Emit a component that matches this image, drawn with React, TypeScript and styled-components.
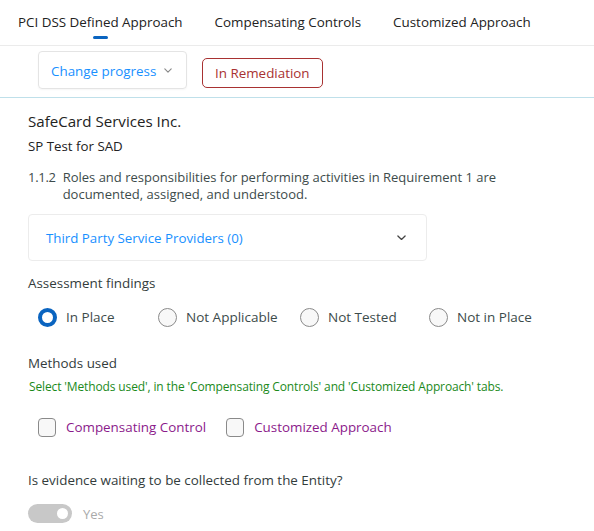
import React from 'react';
import styled, { createGlobalStyle } from 'styled-components';

const GlobalStyle = createGlobalStyle`
  body {
    margin: 0;
    background: #ffffff;
    font-family: 'Open Sans', 'Noto Sans', sans-serif;
    color: #222222;
  }
`;

const Page = styled.div`
  width: 594px;
  height: 531px;
  overflow: hidden;
`;

const TabBar = styled.div`
  height: 46px;
  display: flex;
  align-items: flex-start;
  gap: 32px;
  padding: 0 0 0 18px;
  border-bottom: 1px solid #ebebeb;
  box-sizing: border-box;
`;

const Tab = styled.div<{ $active?: boolean }>`
  position: relative;
  font-size: 13.4px;
  line-height: 20px;
  padding-top: 12px;
  color: #222222;
  &::after {
    content: '';
    display: ${p => (p.$active ? 'block' : 'none')};
    position: absolute;
    left: 50%;
    top: 36px;
    width: 15px;
    height: 3px;
    margin-left: -7px;
    border-radius: 2px;
    background: #0a64c0;
  }
`;

const StatusRow = styled.div`
  height: 52px;
  display: flex;
  align-items: center;
  gap: 15px;
  padding: 0 0 0 38px;
  border-bottom: 1px solid #bfe0ea;
  box-sizing: border-box;
`;

const ProgressButton = styled.div`
  width: 149px;
  height: 38px;
  box-sizing: border-box;
  display: flex;
  align-items: center;
  justify-content: space-between;
  padding: 1px 14px 0 12px;
  border: 1px solid #e4e4e4;
  border-radius: 4px;
  box-shadow: 0 1px 2px rgba(0, 0, 0, 0.04);
  color: #1890ff;
  font-size: 13.4px;
  margin-top: -3px;
`;

const StatusBadge = styled.div`
  height: 30px;
  box-sizing: border-box;
  padding: 0 12px;
  display: flex;
  align-items: center;
  border: 1px solid #a83232;
  border-radius: 5px;
  color: #a83232;
  font-size: 13.4px;
  margin-top: 3px;
`;

const Content = styled.div`
  padding: 12px 28px 0 28px;
  display: flex;
  flex-direction: column;
`;

const Company = styled.div`
  font-size: 15.1px;
  line-height: 22px;
  color: #222222;
`;

const Subtitle = styled.div`
  font-size: 13.3px;
  line-height: 20px;
  margin-top: 4px;
  color: #222222;
`;

const Requirement = styled.div`
  display: flex;
  gap: 7px;
  margin-top: 13px;
  font-size: 13px;
  line-height: 17px;
  color: #3d4b4b;
`;

const ReqNumber = styled.span`
  flex: 0 0 auto;
  letter-spacing: -0.3px;
`;

const Accordion = styled.div`
  width: 399px;
  height: 47px;
  margin-top: 11px;
  box-sizing: border-box;
  display: flex;
  align-items: center;
  justify-content: space-between;
  padding: 0 20px 0 17px;
  border: 1px solid #ececec;
  border-radius: 4px;
  color: #1890ff;
  font-size: 13.3px;
`;

const SectionLabel = styled.div<{ $top: number }>`
  margin-top: ${p => p.$top}px;
  font-size: 13.4px;
  line-height: 20px;
  color: #333c3c;
`;

const RadioRow = styled.div`
  height: 20px;
  display: flex;
  align-items: center;
  margin-top: 14px;
  padding-left: 10px;
`;

const RadioOption = styled.label<{ $width?: number }>`
  display: flex;
  align-items: center;
  gap: 9px;
  width: ${p => (p.$width ? `${p.$width}px` : 'auto')};
  font-size: 13.5px;
  color: #3d4b4b;
`;

const RadioDot = styled.span<{ $checked?: boolean }>`
  width: 19px;
  height: 19px;
  box-sizing: border-box;
  border-radius: 50%;
  border: ${p => (p.$checked ? '4.5px solid #0a64c0' : '1px solid #8a8a8a')};
  background: ${p => (p.$checked ? '#ffffff' : '#f8f8f8')};
`;

const Hint = styled.div`
  margin-top: 5px;
  padding-left: 1px;
  font-size: 12px;
  letter-spacing: -0.13px;
  line-height: 18px;
  color: #1b8a1b;
`;

const CheckRow = styled.div`
  height: 20px;
  display: flex;
  align-items: center;
  gap: 20px;
  margin-top: 21px;
  padding-left: 10px;
`;

const CheckOption = styled.label`
  display: flex;
  align-items: center;
  gap: 10px;
  font-size: 13.4px;
  color: #8b1a8b;
`;

const CheckBox = styled.span`
  width: 18px;
  height: 19px;
  box-sizing: border-box;
  border: 1px solid #8a8a8a;
  border-radius: 4px;
  background: #f8f8f8;
`;

const ToggleRow = styled.div`
  display: flex;
  align-items: center;
  gap: 11px;
  margin-top: 14px;
  font-size: 13px;
  color: #aaaaaa;
`;

const Toggle = styled.span<{ $on?: boolean }>`
  position: relative;
  width: 44px;
  height: 19px;
  border-radius: 10px;
  background: #c8c8c8;
  &::after {
    content: '';
    position: absolute;
    top: 4px;
    left: ${p => (p.$on ? '29px' : '4px')};
    width: 11px;
    height: 11px;
    border-radius: 50%;
    background: #ffffff;
  }
`;

const Chevron = ({ color, size }: { color: string; size: number }) => (
  <svg width={size} height={size / 2 + 1} viewBox="0 0 10 6" fill="none">
    <path d="M1 1l4 4 4-4" stroke={color} strokeWidth="1.4" strokeLinecap="round" strokeLinejoin="round" />
  </svg>
);

const findings = [
  { label: 'In Place', width: 120, checked: true },
  { label: 'Not Applicable', width: 142 },
  { label: 'Not Tested', width: 129 },
  { label: 'Not in Place' },
];

const App: React.FC = () => {
  return (
    <Page>
      <GlobalStyle />
      <TabBar>
        <Tab $active>PCI DSS Defined Approach</Tab>
        <Tab>Compensating Controls</Tab>
        <Tab>Customized Approach</Tab>
      </TabBar>
      <StatusRow>
        <ProgressButton>
          Change progress
          <Chevron color="#888888" size={8} />
        </ProgressButton>
        <StatusBadge>In Remediation</StatusBadge>
      </StatusRow>
      <Content>
        <Company>SafeCard Services Inc.</Company>
        <Subtitle>SP Test for SAD</Subtitle>
        <Requirement>
          <ReqNumber>1.1.2</ReqNumber>
          <span>
            Roles and responsibilities for performing activities in Requirement 1 are documented, assigned, and understood.
          </span>
        </Requirement>
        <Accordion>
          Third Party Service Providers (0)
          <Chevron color="#444444" size={9} />
        </Accordion>
        <SectionLabel $top={12}>Assessment findings</SectionLabel>
        <RadioRow>
          {findings.map(f => (
            <RadioOption key={f.label} $width={f.width}>
              <RadioDot $checked={f.checked} />
              {f.label}
            </RadioOption>
          ))}
        </RadioRow>
        <SectionLabel $top={26}>Methods used</SectionLabel>
        <Hint>Select 'Methods used', in the 'Compensating Controls' and 'Customized Approach' tabs.</Hint>
        <CheckRow>
          <CheckOption>
            <CheckBox />
            Compensating Control
          </CheckOption>
          <CheckOption>
            <CheckBox />
            Customized Approach
          </CheckOption>
        </CheckRow>
        <SectionLabel $top={33}>Is evidence waiting to be collected from the Entity?</SectionLabel>
        <ToggleRow>
          <Toggle $on />
          Yes
        </ToggleRow>
      </Content>
    </Page>
  );
};

export default App;
